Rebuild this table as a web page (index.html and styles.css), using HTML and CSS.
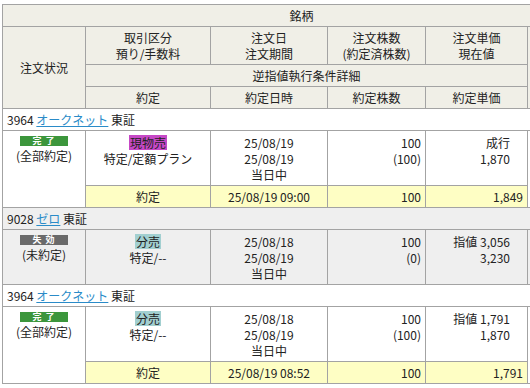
FILE: index.html
```html
<!DOCTYPE html>
<html lang="ja">
<head>
<meta charset="utf-8">
<link rel="stylesheet" href="styles.css">
</head>
<body>
<div class="wrap">
<table class="orders">
  <colgroup>
    <col class="c1"><col class="c2"><col class="c3"><col class="c4"><col class="c5"><col class="c6">
  </colgroup>
  <thead>
    <tr><th colspan="6" class="h1">銘柄</th></tr>
    <tr>
      <th rowspan="3">注文状況</th>
      <th>取引区分<br>預り/手数料</th>
      <th>注文日<br>注文期間</th>
      <th>注文株数<br>(約定済株数)</th>
      <th>注文単価<br>現在値</th>
      <th rowspan="3"></th>
    </tr>
    <tr><th colspan="4">逆指値執行条件詳細</th></tr>
    <tr><th>約定</th><th>約定日時</th><th>約定株数</th><th>約定単価</th></tr>
  </thead>
  <tbody>
    <tr class="sec"><td colspan="6">3964 <a href="#">オークネット</a> 東証</td></tr>
    <tr class="ord">
      <td rowspan="2" class="st"><span class="badge done">完 了</span>(全部約定)</td>
      <td class="ctr"><span class="kind genbutsu">現物売</span><br>特定/定額プラン</td>
      <td class="ctr">25/08/19<br>25/08/19<br>当日中</td>
      <td class="num">100<br>(100)</td>
      <td class="price">成行<br>1,870</td>
      <td rowspan="2"></td>
    </tr>
    <tr class="exe">
      <td class="ctr">約定</td>
      <td class="ctr">25/08/19 09:00</td>
      <td class="num">100</td>
      <td class="num">1,849</td>
    </tr>

    <tr class="sec gray"><td colspan="6">9028 <a href="#">ゼロ</a> 東証</td></tr>
    <tr class="ord gray">
      <td class="st"><span class="badge expired">失 効</span>(未約定)</td>
      <td class="ctr"><span class="kind bunbai">分売</span><br>特定/--</td>
      <td class="ctr">25/08/18<br>25/08/19<br>当日中</td>
      <td class="num">100<br>(0)</td>
      <td class="price">指値 3,056<br>3,230</td>
      <td></td>
    </tr>

    <tr class="sec"><td colspan="6">3964 <a href="#">オークネット</a> 東証</td></tr>
    <tr class="ord">
      <td rowspan="2" class="st"><span class="badge done">完 了</span>(全部約定)</td>
      <td class="ctr"><span class="kind bunbai">分売</span><br>特定/--</td>
      <td class="ctr">25/08/18<br>25/08/19<br>当日中</td>
      <td class="num">100<br>(100)</td>
      <td class="price">指値 1,791<br>1,870</td>
      <td rowspan="2"></td>
    </tr>
    <tr class="exe">
      <td class="ctr">約定</td>
      <td class="ctr">25/08/19 08:52</td>
      <td class="num">100</td>
      <td class="num">1,791</td>
    </tr>
  </tbody>
</table>
</div>
</body>
</html>
```

FILE: styles.css
```css
html, body {
  margin: 0;
  padding: 0;
  background: #fff;
  overflow: hidden;
}
.wrap {
  padding: 4px 0 0 2px;
  width: 528px;
  overflow: hidden;
}
.orders {
  border-collapse: collapse;
  table-layout: fixed;
  width: 598px;
  font-family: "Noto Sans CJK JP", "Noto Sans", sans-serif;
  font-size: 12px;
  line-height: 16px;
  color: #222;
}
.c1 { width: 83px; }
.c2 { width: 125px; }
.c3 { width: 117px; }
.c4 { width: 98px; }
.c5 { width: 102px; }
.c6 { width: 73px; }

.orders th, .orders td {
  border: 1px solid #a3a3a3;
  padding: 3px 4px 2px;
  vertical-align: middle;
}
.orders th {
  background: #f0efe7;
  font-weight: normal;
  text-align: center;
}
.orders th.h1 {
  padding-left: 0;
  padding-right: 0;
}
.sec td {
  border-right: none;
  padding: 3px 4px 2px;
  text-align: left;
}
.sec a {
  color: #2a8bc8;
  text-decoration: underline;
}
.ord td {
  vertical-align: top;
  background: #fff;
  padding-top: 4px;
}
.gray td {
  background: #efefef;
}
.exe td {
  background: #fefec4;
}
.st {
  text-align: center;
}
.ctr {
  text-align: center;
}
.num {
  text-align: right;
}
.price {
  text-align: right;
}
.ord .price {
  padding-right: 17px;
}
.badge {
  display: block;
  width: 48px;
  height: 10px;
  margin: 1px auto 2px;
  font-size: 9px;
  line-height: 10px;
  font-weight: bold;
  color: #fff;
  text-align: center;
  letter-spacing: 1px;
}
.done {
  background: #3c963c;
}
.expired {
  background: #6a6a6a;
}
.kind {
  display: inline-block;
  padding: 0 1px;
  line-height: 15px;
}
.genbutsu {
  background: #c648c6;
}
.bunbai {
  background: #a2cfd0;
}
```
